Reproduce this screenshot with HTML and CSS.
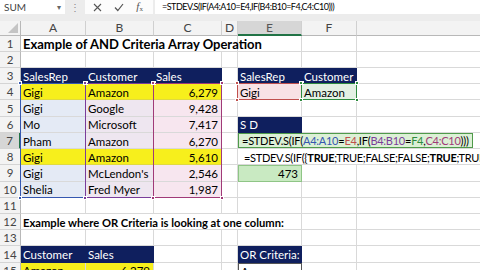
FILE: index.html
```html
<!DOCTYPE html>
<html>
<head>
  <meta charset="utf-8">
  <title>Example of AND Criteria Array Operation</title>
  <link rel="stylesheet" href="styles.css">
</head>
<body>
  <div class="formula-bar">
    <div class="name-box"><span>SUM</span><span class="drop">&#9662;</span></div>
    <div class="dots">&#8942;</div>
    <div class="fx-box">
      <svg width="9" height="9" viewBox="0 0 9 9"><path d="M1 1 L8 8 M8 1 L1 8" stroke="#555" stroke-width="1.1" fill="none"/></svg>
      <svg width="10" height="9" viewBox="0 0 10 9"><path d="M1 4.5 L3.8 7.5 L9 1" stroke="#555" stroke-width="1.2" fill="none"/></svg>
      <span class="fx"><i>f</i><span class="fx-x">x</span></span>
    </div>
    <div class="formula-input">=STDEV.S(IF(A4:A10=E4,IF(B4:B10=F4,C4:C10)))</div>
  </div>
  <div class="toolbar-gap"></div>

  <div class="sheet-wrap">
    <div class="sheet">
      <!-- column headers (G is wide, its letter is off screen) -->
      <div class="h corner"><svg width="10" height="10" viewBox="0 0 10 10"><path d="M10 0 L10 10 L0 10 Z" fill="#c4c4c4"/></svg></div>
      <div class="h">A</div><div class="h">B</div><div class="h">C</div><div class="h">D</div>
      <div class="h sel">E</div><div class="h">F</div><div class="h"></div>

      <!-- row 1 -->
      <div class="rh">1</div>
      <div class="c title big span4">Example of AND Criteria Array Operation</div>
      <div class="c"></div><div class="c"></div><div class="c"></div>

      <!-- row 2 -->
      <div class="rh">2</div>
      <div class="c"></div><div class="c"></div><div class="c"></div><div class="c"></div>
      <div class="c"></div><div class="c"></div><div class="c"></div>

      <!-- row 3 -->
      <div class="rh">3</div>
      <div class="c navy">SalesRep</div><div class="c navy">Customer</div><div class="c navy">Sales</div>
      <div class="c"></div>
      <div class="c navy">SalesRep</div><div class="c navy">Customer</div><div class="c"></div>

      <!-- row 4 -->
      <div class="rh">4</div>
      <div class="c yellow">Gigi</div><div class="c yellow">Amazon</div><div class="c yellow num">6,279</div>
      <div class="c"></div>
      <div class="c fill-e">Gigi</div><div class="c fill-f">Amazon</div><div class="c"></div>

      <!-- row 5 -->
      <div class="rh">5</div>
      <div class="c fill-a">Gigi</div><div class="c fill-b">Google</div><div class="c fill-c num">9,428</div>
      <div class="c"></div><div class="c"></div><div class="c"></div><div class="c"></div>

      <!-- row 6 -->
      <div class="rh">6</div>
      <div class="c fill-a">Mo</div><div class="c fill-b">Microsoft</div><div class="c fill-c num">7,417</div>
      <div class="c"></div>
      <div class="c navy">S D</div><div class="c"></div><div class="c"></div>

      <!-- row 7 -->
      <div class="rh sel">7</div>
      <div class="c fill-a">Pham</div><div class="c fill-b">Amazon</div><div class="c fill-c num">6,270</div>
      <div class="c"></div>
      <div class="c span3 plain">
        <div class="edit-box">=STDEV.S(IF(<span class="ref-a">A4:A10</span>=<span class="ref-e">E4</span>,IF(<span class="ref-b">B4:B10</span>=<span class="ref-f">F4</span>,<span class="ref-c">C4:C10</span>)))</div>
      </div>

      <!-- row 8 -->
      <div class="rh">8</div>
      <div class="c yellow">Gigi</div><div class="c yellow">Amazon</div><div class="c yellow num">5,610</div>
      <div class="c"></div>
      <div class="c span3 eval">=STDEV.S(IF({<b>TRUE</b>;TRUE;FALSE;FALSE;<b>TRUE</b>;TRUE;FALSE},IF({TRUE;FALSE</div>

      <!-- row 9 -->
      <div class="rh">9</div>
      <div class="c fill-a">Gigi</div><div class="c fill-b">McLendon's</div><div class="c fill-c num">2,546</div>
      <div class="c"></div>
      <div class="c result num">473</div><div class="c"></div><div class="c"></div>

      <!-- row 10 -->
      <div class="rh">10</div>
      <div class="c fill-a">Shelia</div><div class="c fill-b">Fred Myer</div><div class="c fill-c num">1,987</div>
      <div class="c"></div><div class="c"></div><div class="c"></div><div class="c"></div>

      <!-- row 11 -->
      <div class="rh">11</div>
      <div class="c"></div><div class="c"></div><div class="c"></div><div class="c"></div>
      <div class="c"></div><div class="c"></div><div class="c"></div>

      <!-- row 12 -->
      <div class="rh">12</div>
      <div class="c title span5">Example where OR Criteria is looking at one column:</div>
      <div class="c"></div><div class="c"></div>

      <!-- row 13 -->
      <div class="rh">13</div>
      <div class="c"></div><div class="c"></div><div class="c"></div><div class="c"></div>
      <div class="c"></div><div class="c"></div><div class="c"></div>

      <!-- row 14 -->
      <div class="rh">14</div>
      <div class="c navy">Customer</div><div class="c navy">Sales</div><div class="c"></div><div class="c"></div>
      <div class="c navy">OR Criteria:</div><div class="c"></div><div class="c"></div>

      <!-- row 15 -->
      <div class="rh">15</div>
      <div class="c yellow">Amazon</div><div class="c yellow num">6,279</div><div class="c"></div><div class="c"></div>
      <div class="c boxed">Amazon</div><div class="c"></div><div class="c"></div>
    </div>

    <!-- coloured range boxes shown while the formula is edited -->
    <div class="ranges">
      <div class="range ra"><i class="hd tl"></i><i class="hd tr"></i><i class="hd bl"></i><i class="hd br"></i></div>
      <div class="range rb"><i class="hd tl"></i><i class="hd tr"></i><i class="hd bl"></i><i class="hd br"></i></div>
      <div class="range rc"><i class="hd tl"></i><i class="hd tr"></i><i class="hd bl"></i><i class="hd br"></i></div>
      <div class="range re"><i class="hd tl"></i><i class="hd tr"></i><i class="hd bl"></i><i class="hd br"></i></div>
      <div class="range rf"><i class="hd tl"></i><i class="hd tr"></i><i class="hd bl"></i><i class="hd br"></i></div>
    </div>
  </div>
</body>
</html>
```

FILE: styles.css
```css
* {
  box-sizing: border-box;
}

html, body {
  margin: 0;
  padding: 0;
}

body {
  width: 480px;
  height: 270px;
  overflow: hidden;
  background: #fff;
  font-family: Lato, "Liberation Sans", sans-serif;
  color: #000;
}

/* formula bar */
.formula-bar {
  display: flex;
  height: 14px;
  background: #ececec;
}

.name-box {
  width: 65px;
  background: #fff;
  display: flex;
  align-items: center;
  justify-content: space-between;
  padding: 0 4px 0 4px;
  font-size: 10px;
  color: #444;
}

.drop {
  font-size: 8px;
  color: #666;
}

.dots {
  width: 20px;
  text-align: center;
  font-size: 10px;
  line-height: 14px;
  color: #888;
}

.fx-box {
  width: 68px;
  background: #fcfcfc;
  display: flex;
  align-items: center;
  justify-content: space-around;
  padding: 0 4px 0 2px;
}

.fx {
  font-family: "Liberation Serif", serif;
  font-size: 11px;
  color: #555;
  line-height: 12px;
}

.fx-x {
  font-size: 7px;
  vertical-align: -1px;
}

.formula-input {
  flex: 1;
  margin-left: 2px;
  background: #fff;
  font-size: 9px;
  letter-spacing: -0.5px;
  line-height: 14px;
  padding-left: 7px;
  white-space: nowrap;
  overflow: hidden;
}

.toolbar-gap {
  height: 7px;
  background: #ececec;
}

/* sheet grid */
.sheet-wrap {
  position: relative;
}

.sheet, .ranges {
  display: grid;
  grid-template-columns: 21px 65px 68px 68px 16px 64px 55px 300px;
  grid-template-rows: 14.6px repeat(15, 16.22px);
}

.h {
  background: #f3f3f3;
  color: #444;
  font-size: 12px;
  border-right: 1px solid #d0d0d0;
  border-bottom: 1px solid #b8b8b8;
  display: flex;
  align-items: center;
  justify-content: center;
}

.h.sel {
  background: #d6d6d6;
  color: #555;
  border-bottom: 2px solid #217346;
}

.corner {
  justify-content: flex-end;
  align-items: flex-end;
  padding: 0 2px 2px 0;
  border-right-color: #b8b8b8;
}

.rh {
  background: #f3f3f3;
  color: #444;
  font-size: 11.5px;
  border-right: 1px solid #b8b8b8;
  border-bottom: 1px solid #d4d4d4;
  display: flex;
  align-items: center;
  justify-content: center;
}

.rh.sel {
  background: #d6d6d6;
  border-right: 2px solid #217346;
}

.c {
  border-right: 1px solid #d9d9d9;
  border-bottom: 1px solid #d9d9d9;
  font-size: 11.5px;
  padding: 1px 2px 0 2px;
  white-space: nowrap;
  overflow: hidden;
  display: flex;
  align-items: center;
}

.num {
  justify-content: flex-end;
  padding-right: 3px;
}

.title {
  font-weight: bold;
  font-size: 11.2px;
  overflow: visible;
}

.title.big {
  font-size: 13px;
}

.span3 { grid-column: span 3; }
.span4 { grid-column: span 4; }
.span5 { grid-column: span 5; }

.navy {
  background: #0f1f5e;
  color: #fff;
  border-color: #0f1f5e;
}

.yellow {
  background: #f7ef1c;
  border-bottom-color: #e0da40;
}

.fill-a { background: #e4eaf5; }
.fill-b { background: #eee6f0; }
.fill-c { background: #f7e6ef; }
.fill-e { background: #f8e2e5; }
.fill-f { background: #e3f0e3; }

.plain {
  padding: 0;
  border-right: none;
}

.edit-box {
  width: 235px;
  height: 100%;
  background: #dcf0d6;
  border: 1px solid #4f9a4a;
  padding: 0 0 0 3px;
  display: flex;
  align-items: center;
  font-size: 11px;
  letter-spacing: -0.25px;
  white-space: nowrap;
  overflow: hidden;
}

.ref-a { color: #3557b0; }
.ref-e { color: #c0504d; }
.ref-b { color: #7a3d9a; }
.ref-f { color: #2e8b3e; }
.ref-c { color: #a03a78; }

.eval {
  padding-left: 6px;
  font-size: 11px;
  letter-spacing: -0.3px;
  border-right: none;
}

.result {
  background: #c9eac2;
  border: 1px solid #8fc586;
}

.boxed {
  border: 1px solid #555;
}

/* range highlight overlay */
.ranges {
  position: absolute;
  top: 0;
  left: 0;
  pointer-events: none;
}

.range {
  position: relative;
  margin: -1px 0 0 -1px;
  border: 1px solid;
}

.ra { grid-column: 2; grid-row: 5 / 12; border-color: #3557b0; }
.rb { grid-column: 3; grid-row: 5 / 12; border-color: #7a3d9a; }
.rc { grid-column: 4; grid-row: 5 / 12; border-color: #a03a78; }
.re { grid-column: 6; grid-row: 5; border-color: #c0504d; }
.rf { grid-column: 7; grid-row: 5; border-color: #2e8b3e; }

.hd {
  position: absolute;
  width: 4px;
  height: 4px;
  border: 1px solid #fff;
}

.ra .hd { background: #3557b0; }
.rb .hd { background: #7a3d9a; }
.rc .hd { background: #a03a78; }
.re .hd { background: #c0504d; }
.rf .hd { background: #2e8b3e; }

.tl { top: -3px; left: -3px; }
.tr { top: -3px; right: -3px; }
.bl { bottom: -3px; left: -3px; }
.br { bottom: -3px; right: -3px; }
```
